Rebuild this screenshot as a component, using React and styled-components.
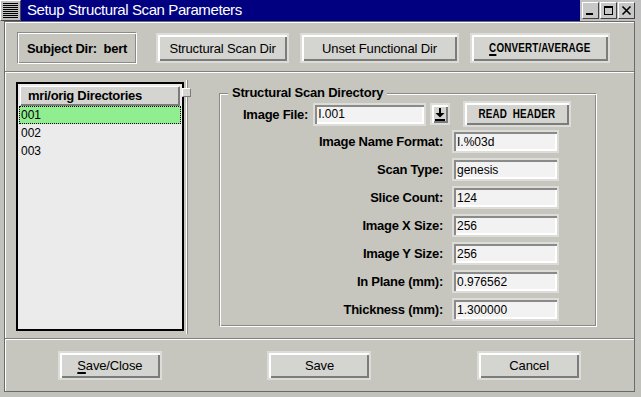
import React from "react";
import styled, { createGlobalStyle } from "styled-components";

const BG = "#c6c6be";
const FACE = "#d4d4d0";
const RING = "#dcdcd8";
const DARK = "#7c7c7c";

const GlobalStyle = createGlobalStyle`
  html, body { margin: 0; padding: 0; background: #c0c0c0; }
  body { font-family: "Liberation Sans", Arial, sans-serif; }
  * { box-sizing: border-box; }
`;

const Window = styled.div`
  width: 641px;
  height: 397px;
  display: flex;
  flex-direction: column;
  background: #c2c2bc;
  font-family: "Liberation Sans", Arial, sans-serif;
  color: #000;
  overflow: hidden;
`;

const TitleBar = styled.div`
  height: 21px;
  flex: none;
  display: flex;
`;

const MenuButton = styled.div`
  width: 21px;
  height: 21px;
  background: #c0c0c0;
  border: 1px solid;
  border-color: #fff #4a4a4a #4a4a4a #fff;
  display: flex;
  align-items: center;
  justify-content: center;
`;

const MenuLines = styled.div`
  width: 15px;
  height: 15px;
  background: repeating-linear-gradient(to bottom, #000 0 1px, transparent 1px 2px);
`;

const Title = styled.div`
  flex: 1;
  background: #000080;
  color: #fff;
  font-size: 15px;
  letter-spacing: -0.4px;
  line-height: 20px;
  padding-left: 6px;
  white-space: nowrap;
`;

const WinButtons = styled.div`
  display: flex;
  gap: 1px;
  padding: 2px 6px 2px 2px;
  background: #c0c0c0;
`;

const WinButton = styled.div`
  width: 17px;
  height: 17px;
  border: 1px solid;
  border-color: #fff #404040 #404040 #fff;
  background: #c8c8c8;
  display: flex;
  align-items: center;
  justify-content: center;
`;

const Body = styled.div`
  flex: 1;
  display: flex;
  padding: 0 6px 5px 4px;
  min-height: 0;
`;

const Content = styled.div`
  flex: 1;
  display: flex;
  flex-direction: column;
  background: ${BG};
  border: 1px solid #6a6a6a;
  box-shadow: inset 1px 1px #fff;
  min-height: 0;
`;

const TopBar = styled.div`
  flex: none;
  display: flex;
  align-items: center;
  padding: 10px 12px 7px;
`;

const SubjectBox = styled.div`
  width: 120px;
  height: 32px;
  border: 1px solid;
  border-color: #8a8a8a #fff #fff #8a8a8a;
  box-shadow: inset 1px 1px #fff, inset -1px -1px #8a8a8a;
  display: flex;
  align-items: center;
  justify-content: center;
  font-size: 13px;
  font-weight: bold;
  letter-spacing: -0.25px;
  white-space: pre;
`;

const Button = styled.button`
  flex: none;
  width: ${(p) => p.$w}px;
  height: ${(p) => p.$h || 30}px;
  margin: 0 0 0 ${(p) => p.$ml || 0}px;
  padding: 0;
  border: 2px solid ${RING};
  box-shadow: inset 2px 2px #fff, inset -2px -2px ${DARK};
  background: ${FACE};
  font-family: "Liberation Sans", Arial, sans-serif;
  font-size: 13px;
  letter-spacing: -0.15px;
  color: #000;
  display: flex;
  align-items: center;
  justify-content: center;
  white-space: pre;
  cursor: default;
  & u {
    text-decoration-thickness: 2px;
    text-underline-offset: 2px;
  }
`;

const NarrowText = styled.span`
  display: inline-block;
  font-size: 12px;
  font-weight: bold;
  letter-spacing: 0.2px;
  transform: scaleX(0.82);
  white-space: pre;
`;

const Separator = styled.div`
  flex: none;
  height: 2px;
  border-top: 1px solid #808080;
  border-bottom: 1px solid #fff;
`;

const Middle = styled.div`
  flex: 1;
  display: flex;
  min-height: 0;
`;

const ListPane = styled.div`
  width: 168px;
  margin: 9px 0 7px 11px;
  border: 2px solid #000;
  background: #ebebeb;
  padding: 1px;
  display: flex;
  flex-direction: column;
`;

const ListHeader = styled.div`
  height: 20px;
  margin: 1px 1px 0;
  background: ${FACE};
  border: 1px solid;
  border-color: #fff ${DARK} ${DARK} #fff;
  box-shadow: inset -1px -1px ${DARK};
  font-size: 13px;
  font-weight: bold;
  letter-spacing: -0.3px;
  line-height: 17px;
  padding-left: 7px;
  white-space: nowrap;
`;

const ListRow = styled.div`
  height: 18px;
  font-size: 12px;
  line-height: 17px;
  padding-left: 1px;
  border: 1px ${(p) => (p.$selected ? "dotted #000" : "solid transparent")};
  background: ${(p) => (p.$selected ? "#90ee90" : "transparent")};
`;

const Sash = styled.div`
  position: relative;
  width: 2px;
  margin: 7px 0 4px 2px;
  border-left: 1px solid #fff;
  border-right: 1px solid #8a8a8a;
`;

const SashHandle = styled.div`
  position: absolute;
  left: -5px;
  top: 8px;
  width: 9px;
  height: 9px;
  background: ${FACE};
  border: 1px solid;
  border-color: #fff ${DARK} ${DARK} #fff;
`;

const Group = styled.div`
  position: relative;
  width: 378px;
  margin: 20px 0 11px 31px;
  border: 1px solid;
  border-color: #8a8a8a #fff #fff #8a8a8a;
  box-shadow: inset 1px 1px #fff, inset -1px -1px #8a8a8a;
`;

const Legend = styled.div`
  position: absolute;
  top: -9px;
  left: 8px;
  padding: 0 4px;
  background: ${BG};
  font-size: 13px;
  font-weight: bold;
  letter-spacing: -0.22px;
  line-height: 16px;
  white-space: nowrap;
`;

const Label = styled.span`
  font-size: 13px;
  font-weight: bold;
  letter-spacing: -0.25px;
  white-space: nowrap;
`;

const FileRow = styled.div`
  display: flex;
  align-items: center;
  height: 26px;
  margin-top: 7px;
  padding-left: 23px;
`;

const Fields = styled.div`
  display: flex;
  flex-direction: column;
  gap: 5px;
  margin-top: 3px;
`;

const FieldRow = styled.div`
  display: flex;
  align-items: center;
  height: 23px;
`;

const FieldLabel = styled(Label)`
  width: 223px;
  text-align: right;
  margin-right: 9px;
`;

const Entry = styled.input`
  flex: none;
  width: ${(p) => p.$w}px;
  height: 23px;
  margin: 0 0 0 ${(p) => p.$ml || 0}px;
  padding: 0 0 0 3px;
  border: 2px solid ${RING};
  box-shadow: inset 2px 2px #8a8a8a, inset -2px -2px #fff;
  background: #f2f2f2;
  font-family: "Liberation Sans", Arial, sans-serif;
  font-size: 12px;
  color: #000;
  outline: none;
`;

const BottomBar = styled.div`
  flex: none;
  height: 51px;
  display: flex;
  align-items: center;
  justify-content: space-around;
`;

const ArrowIcon = () => (
  <svg width="10" height="13" viewBox="0 0 10 13">
    <rect x="4" y="0" width="2" height="6" fill="#000" />
    <path d="M0.5 5 H9.5 L5 9.5 Z" fill="#000" />
    <rect x="0" y="11" width="10" height="2" fill="#000" />
  </svg>
);

const fields = [
  ["Image Name Format:", "I.%03d"],
  ["Scan Type:", "genesis"],
  ["Slice Count:", "124"],
  ["Image X Size:", "256"],
  ["Image Y Size:", "256"],
  ["In Plane (mm):", "0.976562"],
  ["Thickness (mm):", "1.300000"],
];

export default function App() {
  return (
    <>
      <GlobalStyle />
      <Window>
        <TitleBar>
          <MenuButton>
            <MenuLines />
          </MenuButton>
          <Title>Setup Structural Scan Parameters</Title>
          <WinButtons>
            <WinButton>
              <svg width="11" height="11" viewBox="0 0 11 11">
                <rect x="1" y="8" width="7" height="2" fill="#000" />
              </svg>
            </WinButton>
            <WinButton>
              <svg width="11" height="11" viewBox="0 0 11 11">
                <rect x="1.5" y="1.5" width="8" height="8" fill="none" stroke="#000" />
                <rect x="1" y="1" width="9" height="2" fill="#000" />
              </svg>
            </WinButton>
            <WinButton>
              <svg width="11" height="11" viewBox="0 0 11 11">
                <path d="M1.5 1.5 L9.5 9.5 M9.5 1.5 L1.5 9.5" stroke="#000" strokeWidth="1.6" />
              </svg>
            </WinButton>
          </WinButtons>
        </TitleBar>
        <Body>
          <Content>
            <TopBar>
              <SubjectBox>{"Subject Dir:  bert"}</SubjectBox>
              <Button $w={133} $ml={19}>Structural Scan Dir</Button>
              <Button $w={159} $ml={11}>Unset Functional Dir</Button>
              <Button $w={140} $ml={11}>
                <NarrowText>
                  <u>C</u>ONVERT/AVERAGE
                </NarrowText>
              </Button>
            </TopBar>
            <Separator />
            <Middle>
              <ListPane>
                <ListHeader>mri/orig Directories</ListHeader>
                <ListRow $selected>001</ListRow>
                <ListRow>002</ListRow>
                <ListRow>003</ListRow>
              </ListPane>
              <Sash>
                <SashHandle />
              </Sash>
              <Group>
                <Legend>Structural Scan Directory</Legend>
                <FileRow>
                  <Label>Image File:</Label>
                  <Entry $w={113} $ml={5} readOnly value="I.001" />
                  <Button $w={20} $h={22} $ml={4}>
                    <ArrowIcon />
                  </Button>
                  <Button $w={108} $h={26} $ml={13}>
                    <NarrowText>{"READ  HEADER"}</NarrowText>
                  </Button>
                </FileRow>
                <Fields>
                  {fields.map(([label, value]) => (
                    <FieldRow key={label}>
                      <FieldLabel>{label}</FieldLabel>
                      <Entry $w={107} readOnly value={value} />
                    </FieldRow>
                  ))}
                </Fields>
              </Group>
            </Middle>
            <Separator />
            <BottomBar>
              <Button $w={104} $h={29}>
                <u>S</u>ave/Close
              </Button>
              <Button $w={104} $h={29}>Save</Button>
              <Button $w={104} $h={29}>Cancel</Button>
            </BottomBar>
          </Content>
        </Body>
      </Window>
    </>
  );
}
